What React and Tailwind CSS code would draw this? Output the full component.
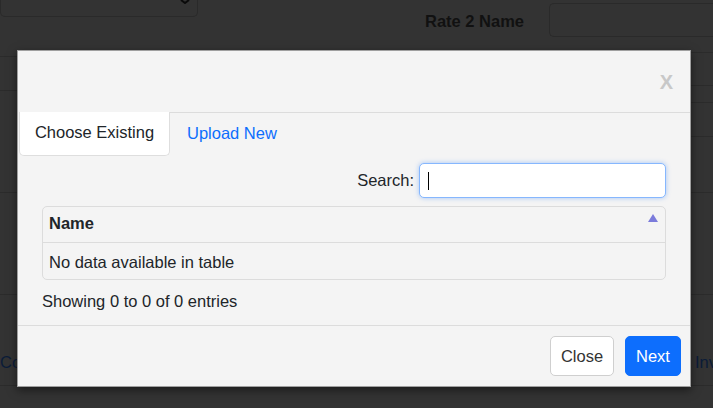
import React from "react";

function Line({ h }) {
  return <div className={`${h} border-b border-[#2b2b2b]`} />;
}

export default function App() {
  return (
    <div className="relative w-[713px] h-[408px] overflow-hidden bg-[#333] font-['Liberation_Sans',Arial,sans-serif] text-[16.5px] text-[#212529]">
      {/* dimmed page behind the backdrop */}
      <div className="flex flex-col">
        <div className="flex items-start h-[40px]">
          <div className="relative w-[198px] h-[17px] border border-t-0 border-[#2a2a2a] rounded-b-[5px]">
            <svg className="absolute right-[6px] top-0" width="12" height="4" viewBox="0 0 12 4">
              <path d="M2 0 L6 3 L10 0" stroke="#0a0a0a" strokeWidth="2" fill="none" />
            </svg>
          </div>
          <div className="ml-[227px] mt-[9px] font-bold text-[#111]">Rate 2 Name</div>
          <div className="ml-[25px] mt-[3px] h-[34px] flex-1 border border-r-0 border-[#2a2a2a] rounded-l-[5px]" />
        </div>
        <div className="flex">
          <div className="w-[17px] flex flex-col">
            <Line h="h-[17px]" />
            <Line h="h-[34px]" />
            <Line h="h-[102px]" />
            <Line h="h-[102px]" />
          </div>
          <div className="flex-1" />
          <div className="w-[22px] flex flex-col">
            <Line h="h-[13px]" />
            <Line h="h-[33px]" />
            <Line h="h-[17px]" />
            <Line h="h-[34px]" />
            <Line h="h-[56px]" />
            <Line h="h-[102px]" />
          </div>
        </div>
        <div className="flex justify-between h-[91px] items-end pb-[10px] border-b border-[#2b2b2b]">
          <span className="text-[#0b1c38]">Co</span>
          <span className="text-[#0b1c38] w-[18px] overflow-hidden whitespace-nowrap">Inv</span>
        </div>
      </div>

      {/* modal */}
      <div className="absolute left-[17px] top-[50px] w-[674px] h-[337px] border border-[#9f9f9f] bg-[#f4f4f4] flex flex-col shadow-[0_3px_9px_rgba(0,0,0,0.5)]">
        <div className="h-[61px] flex items-center justify-end pr-[17px] shrink-0">
          <span className="text-[20px] font-bold text-[#c8c8c8] leading-none">X</span>
        </div>

        <div className="flex h-[44px] shrink-0">
          <div className="ml-px w-[151px] h-[44px] bg-white border border-t-0 border-[#dedede] rounded-b-[5px] flex items-center justify-center pb-[2px]">
            Choose Existing
          </div>
          <div className="flex-1 border-t border-[#dcdcdc] flex items-center pl-[17px] pb-[2px] text-[#0d6efd]">
            Upload New
          </div>
        </div>

        <div className="flex-1 px-[24px] flex flex-col">
          <div className="flex justify-end items-center gap-[5px] mt-[7px]">
            <span>Search:</span>
            <div className="w-[247px] h-[35px] bg-white border border-[#86b7fe] rounded-[5px] shadow-[0_0_5px_rgba(13,110,253,0.35)] flex items-center pl-[8px]">
              <div className="w-px h-[18px] bg-black" />
            </div>
          </div>

          <div className="mt-[8px] border border-[#dcdcdc] rounded-[5px]">
            <div className="h-[36px] flex justify-between items-start border-b border-[#dcdcdc] pl-[6px] pr-[7px]">
              <span className="font-bold mt-[4px]">Name</span>
              <svg className="mt-[7px]" width="10" height="8" viewBox="0 0 10 8">
                <polygon points="5,0 10,8 0,8" fill="#7b7bdb" />
              </svg>
            </div>
            <div className="h-[36px] flex items-center pl-[6px] pt-[2px]">No data available in table</div>
          </div>

          <div className="mt-[9px]">Showing 0 to 0 of 0 entries</div>
        </div>

        <div className="h-[61px] shrink-0 border-t border-[#dcdcdc] flex justify-end items-center gap-[11px] pr-[9px]">
          <button className="w-[64px] h-[40px] bg-white border border-[#cfcfcf] rounded-[5px] text-[#333]">Close</button>
          <button className="w-[56px] h-[40px] bg-[#0d6efd] border border-[#0d6efd] rounded-[5px] text-white">Next</button>
        </div>
      </div>
    </div>
  );
}
